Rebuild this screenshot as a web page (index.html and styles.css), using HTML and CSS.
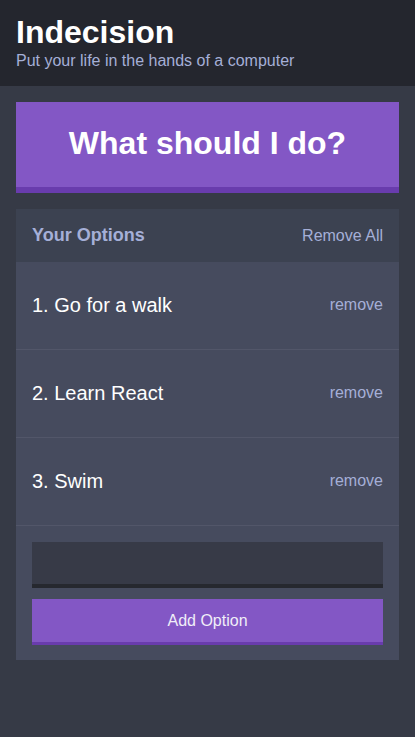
FILE: index.html
```html
<!DOCTYPE html>
<html lang="en">
<head>
<meta charset="utf-8">
<title>Indecision</title>
<link rel="stylesheet" href="styles.css">
</head>
<body>
<header class="header">
  <div class="container">
    <h1 class="header__title">Indecision</h1>
    <h2 class="header__subtitle">Put your life in the hands of a computer</h2>
  </div>
</header>
<main class="container">
  <button class="big-button">What should I do?</button>
  <section class="widget">
    <div class="widget-header">
      <h3 class="widget-header__title">Your Options</h3>
      <button class="button-link">Remove All</button>
    </div>
    <div class="option">
      <p class="option__text">1. Go for a walk</p>
      <button class="button-link">remove</button>
    </div>
    <div class="option">
      <p class="option__text">2. Learn React</p>
      <button class="button-link">remove</button>
    </div>
    <div class="option">
      <p class="option__text">3. Swim</p>
      <button class="button-link">remove</button>
    </div>
    <form class="add-option">
      <input class="add-option__input" type="text" name="option">
      <button class="button" type="button">Add Option</button>
    </form>
  </section>
</main>
</body>
</html>
```

FILE: styles.css
```css
* { box-sizing: border-box; }

html, body {
  margin: 0;
  padding: 0;
}

body {
  background: #363a46;
  font-family: "Liberation Sans", Arial, Helvetica, sans-serif;
  color: #ffffff;
  min-height: 737px;
}

.container {
  padding: 0 16px;
}

.header {
  background: #24262e;
  padding: 16px 0 16px;
  margin-bottom: 16px;
}

.header__title {
  margin: 0;
  font-size: 32px;
  line-height: 1;
  font-weight: bold;
  color: #ffffff;
}

.header__subtitle {
  margin: 4px 0 0;
  font-size: 16px;
  font-weight: 500;
  color: #a5afd7;
  line-height: 18px;
}

.big-button {
  display: block;
  width: 100%;
  background: #8357c5;
  border: none;
  border-bottom: 6px solid #693cad;
  color: #ffffff;
  font-family: inherit;
  font-weight: bold;
  font-size: 32px;
  line-height: 33px;
  padding: 25px 0 27px;
  margin: 0 0 16px;
  cursor: pointer;
}

.widget {
  background: #464b5e;
}

.widget-header {
  background: #3c4251;
  display: flex;
  justify-content: space-between;
  align-items: center;
  padding: 16px;
  height: 53px;
}

.widget-header__title {
  margin: 0;
  font-size: 18px;
  font-weight: bold;
  color: #a5afd7;
}

.button-link {
  background: none;
  border: none;
  padding: 0;
  font-family: inherit;
  font-size: 16px;
  color: #a5afd7;
  cursor: pointer;
}

.option {
  display: flex;
  justify-content: space-between;
  align-items: center;
  height: 88px;
  padding: 0 16px 1px;
  border-bottom: 1px solid #525669;
}

.option__text {
  margin: 0;
  font-size: 20px;
  color: #ffffff;
}

.add-option {
  display: flex;
  flex-direction: column;
  gap: 11px;
  padding: 16px 16px 15px;
  margin: 0;
}

.add-option__input {
  display: block;
  width: 100%;
  height: 46px;
  background: #373a47;
  border: none;
  border-bottom: 4px solid #26282f;
  color: #a5afd7;
  font-family: inherit;
  font-size: 16px;
  padding: 12px;
  outline: none;
}

.button {
  display: block;
  width: 100%;
  height: 46px;
  background: #8357c5;
  border: none;
  border-bottom: 3px solid #693cad;
  color: #f0eef8;
  font-family: inherit;
  font-size: 16px;
  padding: 0;
  cursor: pointer;
}
```
